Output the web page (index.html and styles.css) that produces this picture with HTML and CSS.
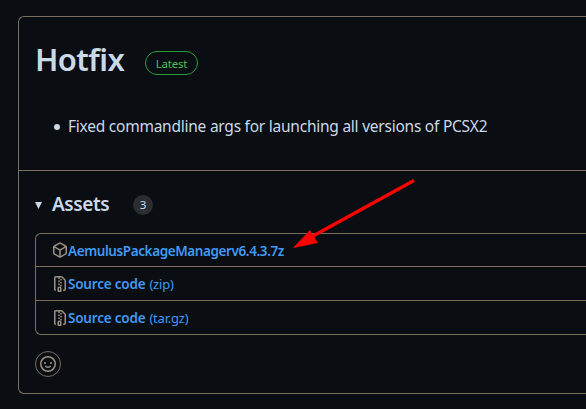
FILE: index.html
```html
<!DOCTYPE html>
<html lang="en">
<head>
<meta charset="utf-8">
<title>Hotfix</title>
<link rel="stylesheet" href="styles.css">
</head>
<body>
<main class="release">
  <section class="release-body">
    <header class="release-header">
      <h1 class="title">Hotfix</h1>
      <span class="label">Latest</span>
    </header>
    <ul class="notes"><li><span class="note">Fixed commandline args for launching all versions of PCSX2</span></li></ul>
  </section>
  <section class="assets">
    <div class="assets-header">
      <svg class="caret" viewBox="0 0 7 7"><path d="M0 0h7L3.5 7z"/></svg>
      <h2 class="assets-title">Assets</h2>
      <span class="counter">3</span>
    </div>
    <ul class="asset-list">
      <li class="asset">
        <svg class="icon" viewBox="0 0 16 16"><path d="m8.878.392 5.25 3.045c.54.314.872.89.872 1.514v6.098a1.75 1.75 0 0 1-.872 1.514l-5.25 3.045a1.75 1.75 0 0 1-1.756 0l-5.25-3.045A1.75 1.75 0 0 1 1 11.049V4.951c0-.624.332-1.201.872-1.514L7.122.392a1.75 1.75 0 0 1 1.756 0ZM7.875 1.69l-4.63 2.685L8 7.133l4.755-2.758-4.63-2.685a.248.248 0 0 0-.25 0ZM2.5 5.677v5.372c0 .09.047.171.125.216l4.625 2.683V8.432Zm6.25 8.271 4.625-2.683a.25.25 0 0 0 .125-.216V5.677L8.75 8.432Z"/></svg>
        <a class="name name-package">AemulusPackageManagerv6.4.3.7z</a>
      </li>
      <li class="asset">
        <svg class="icon" viewBox="0 0 16 16"><path d="M3.5 1.75v11.5c0 .09.048.173.126.217a.75.75 0 0 1-.752 1.298A1.748 1.748 0 0 1 2 13.25V1.75C2 .784 2.784 0 3.75 0h5.586c.464 0 .909.185 1.237.513l2.914 2.914c.329.328.513.773.513 1.237v8.586A1.75 1.75 0 0 1 12.25 15h-.5a.75.75 0 0 1 0-1.5h.5a.25.25 0 0 0 .25-.25V4.664a.25.25 0 0 0-.073-.177L9.513 1.573a.25.25 0 0 0-.177-.073H7.25a.75.75 0 0 1 0 1.5h-.5a.75.75 0 0 1 0-1.5h-3a.25.25 0 0 0-.25.25Zm3.75 8.75h.5c.966 0 1.75.784 1.75 1.75v3a.75.75 0 0 1-.75.75h-2.5a.75.75 0 0 1-.75-.75v-3c0-.966.784-1.75 1.75-1.75ZM6 5.25a.75.75 0 0 1 .75-.75h.5a.75.75 0 0 1 0 1.5h-.5A.75.75 0 0 1 6 5.25Zm.75 2.25h.5a.75.75 0 0 1 0 1.5h-.5a.75.75 0 0 1 0-1.5Zm1.25-1.25A.75.75 0 0 1 8.75 6h.5a.75.75 0 0 1 0 1.5h-.5a.75.75 0 0 1-.75-.75ZM8 3.75A.75.75 0 0 1 8.75 3h.5a.75.75 0 0 1 0 1.5h-.5A.75.75 0 0 1 8 3.75ZM8.75 9h.5a.75.75 0 0 1 0 1.5h-.5a.75.75 0 0 1 0-1.5ZM7 12.25v2.25h1v-2.25a.25.25 0 0 0-.25-.25h-.5a.25.25 0 0 0-.25.25Z"/></svg>
        <a class="name"><span>Source code</span><span class="kind">(zip)</span></a>
      </li>
      <li class="asset">
        <svg class="icon" viewBox="0 0 16 16"><path d="M3.5 1.75v11.5c0 .09.048.173.126.217a.75.75 0 0 1-.752 1.298A1.748 1.748 0 0 1 2 13.25V1.75C2 .784 2.784 0 3.75 0h5.586c.464 0 .909.185 1.237.513l2.914 2.914c.329.328.513.773.513 1.237v8.586A1.75 1.75 0 0 1 12.25 15h-.5a.75.75 0 0 1 0-1.5h.5a.25.25 0 0 0 .25-.25V4.664a.25.25 0 0 0-.073-.177L9.513 1.573a.25.25 0 0 0-.177-.073H7.25a.75.75 0 0 1 0 1.5h-.5a.75.75 0 0 1 0-1.5h-3a.25.25 0 0 0-.25.25Zm3.75 8.75h.5c.966 0 1.75.784 1.75 1.75v3a.75.75 0 0 1-.75.75h-2.5a.75.75 0 0 1-.75-.75v-3c0-.966.784-1.75 1.75-1.75ZM6 5.25a.75.75 0 0 1 .75-.75h.5a.75.75 0 0 1 0 1.5h-.5A.75.75 0 0 1 6 5.25Zm.75 2.25h.5a.75.75 0 0 1 0 1.5h-.5a.75.75 0 0 1 0-1.5Zm1.25-1.25A.75.75 0 0 1 8.75 6h.5a.75.75 0 0 1 0 1.5h-.5a.75.75 0 0 1-.75-.75ZM8 3.75A.75.75 0 0 1 8.75 3h.5a.75.75 0 0 1 0 1.5h-.5A.75.75 0 0 1 8 3.75ZM8.75 9h.5a.75.75 0 0 1 0 1.5h-.5a.75.75 0 0 1 0-1.5ZM7 12.25v2.25h1v-2.25a.25.25 0 0 0-.25-.25h-.5a.25.25 0 0 0-.25.25Z"/></svg>
        <a class="name"><span>Source code</span><span class="kind">(tar.gz)</span></a>
      </li>
    </ul>
    <button class="react" aria-label="Add reaction">
      <svg class="icon" viewBox="0 0 16 16"><path d="M8 0a8 8 0 1 1 0 16A8 8 0 0 1 8 0ZM1.5 8a6.5 6.5 0 1 0 13 0 6.5 6.5 0 0 0-13 0Zm3.82 1.636a.75.75 0 0 1 1.038.175l.007.009c.103.118.22.222.35.31.264.178.683.37 1.285.37.602 0 1.02-.192 1.285-.371.13-.088.247-.192.35-.31l.007-.008a.75.75 0 0 1 1.222.87c-.203.26-.45.49-.74.689C9.622 11.72 8.917 12 8 12s-1.621-.28-2.125-.63a3.32 3.32 0 0 1-.74-.689.75.75 0 0 1 .184-1.045ZM12 7a1 1 0 1 1-2 0 1 1 0 0 1 2 0ZM5 8a1 1 0 1 1 0-2 1 1 0 0 1 0 2Z"/></svg>
    </button>
  </section>
</main>
<svg class="arrow" viewBox="0 0 122 70"><path d="M121 1.500 20 57" stroke="#f00" stroke-width="3.200" fill="none"/><path d="M0 69 17 51 25 64z" fill="#f00"/></svg>
</body>
</html>
```
FILE: styles.css
```css
* { box-sizing: border-box; }
body {
  margin: 0;
  height: 409px;
  overflow: hidden;
  background: #0a0d11;
  color: #c9d9e8;
  font-family: "Noto Sans", "Open Sans", sans-serif;
}
h1, h2, ul { margin: 0; padding: 0; }
ul { list-style: none; }
.release {
  height: 378px;
  margin: 16px 0 0 18px;
  border: 1px solid #7a7060;
  border-right: 0;
  border-radius: 6px 0 0 6px;
}
.release-body {
  height: 154px;
  padding: 19px 16px 0 16px;
  border-bottom: 1px solid #7a7060;
}
.release-header { display: flex; align-items: center; height: 48px; }
.title {
  width: 110px;
  margin-top: -2px;
  font-size: 31px;
  font-weight: 600;
  line-height: 48px;
  letter-spacing: -0.6px;
  white-space: nowrap;
}
.label {
  width: 53px;
  height: 24px;
  margin-top: 6px;
  border: 1px solid #2a9c3e;
  border-radius: 12px;
  color: #4cc05c;
  font-size: 11.5px;
  line-height: 23px;
  letter-spacing: -0.2px;
  text-align: center;
}
.notes { margin-top: 30px; }
.notes li { display: flex; align-items: center; height: 24px; }
.notes li::before {
  content: "";
  width: 6px;
  height: 6px;
  margin: 2px 8px 0 19px;
  border-radius: 50%;
  background: #c9d9e8;
}
.note { font-size: 15.5px; letter-spacing: -0.24px; white-space: nowrap; }
.assets { padding: 19px 0 0 16px; }
.assets-header { display: flex; align-items: center; height: 28px; }
.caret { width: 7px; height: 7px; margin: 3px 10px 0 0; fill: #c9d9e8; }
.assets-title {
  width: 81px;
  margin-top: -1px;
  font-size: 19px;
  font-weight: 600;
  line-height: 28px;
  letter-spacing: -0.4px;
}
.counter {
  width: 20px;
  height: 20px;
  margin-top: 2px;
  border-radius: 50%;
  background: #2a2e33;
  font-size: 11.5px;
  line-height: 20px;
  text-align: center;
}
.asset-list {
  margin-top: 15px;
  height: 102px;
  border: 1px solid #7a7060;
  border-right: 0;
  border-radius: 6px 0 0 6px;
}
.asset { display: flex; align-items: center; height: 34px; padding-left: 16px; }
.asset:first-child { height: 32px; }
.asset + .asset { border-top: 1px solid #7a7060; }
.icon { width: 16px; height: 16px; flex: none; fill: #9a9184; }
.name {
  display: flex;
  gap: 4px;
  margin-top: 1px;
  color: #409af5;
  font-size: 13.5px;
  font-weight: 600;
  letter-spacing: -0.2px;
  line-height: 20px;
  white-space: nowrap;
}
.name-package { letter-spacing: -0.4px; }
.kind { font-weight: 400; font-size: 13px; }
.react {
  display: grid;
  place-items: center;
  width: 26px;
  height: 26px;
  margin-top: 16px;
  padding: 0;
  border: 1px solid #7a7060;
  border-radius: 50%;
  background: none;
}
.arrow { position: absolute; left: 293px; top: 179px; width: 122px; height: 70px; }
```
